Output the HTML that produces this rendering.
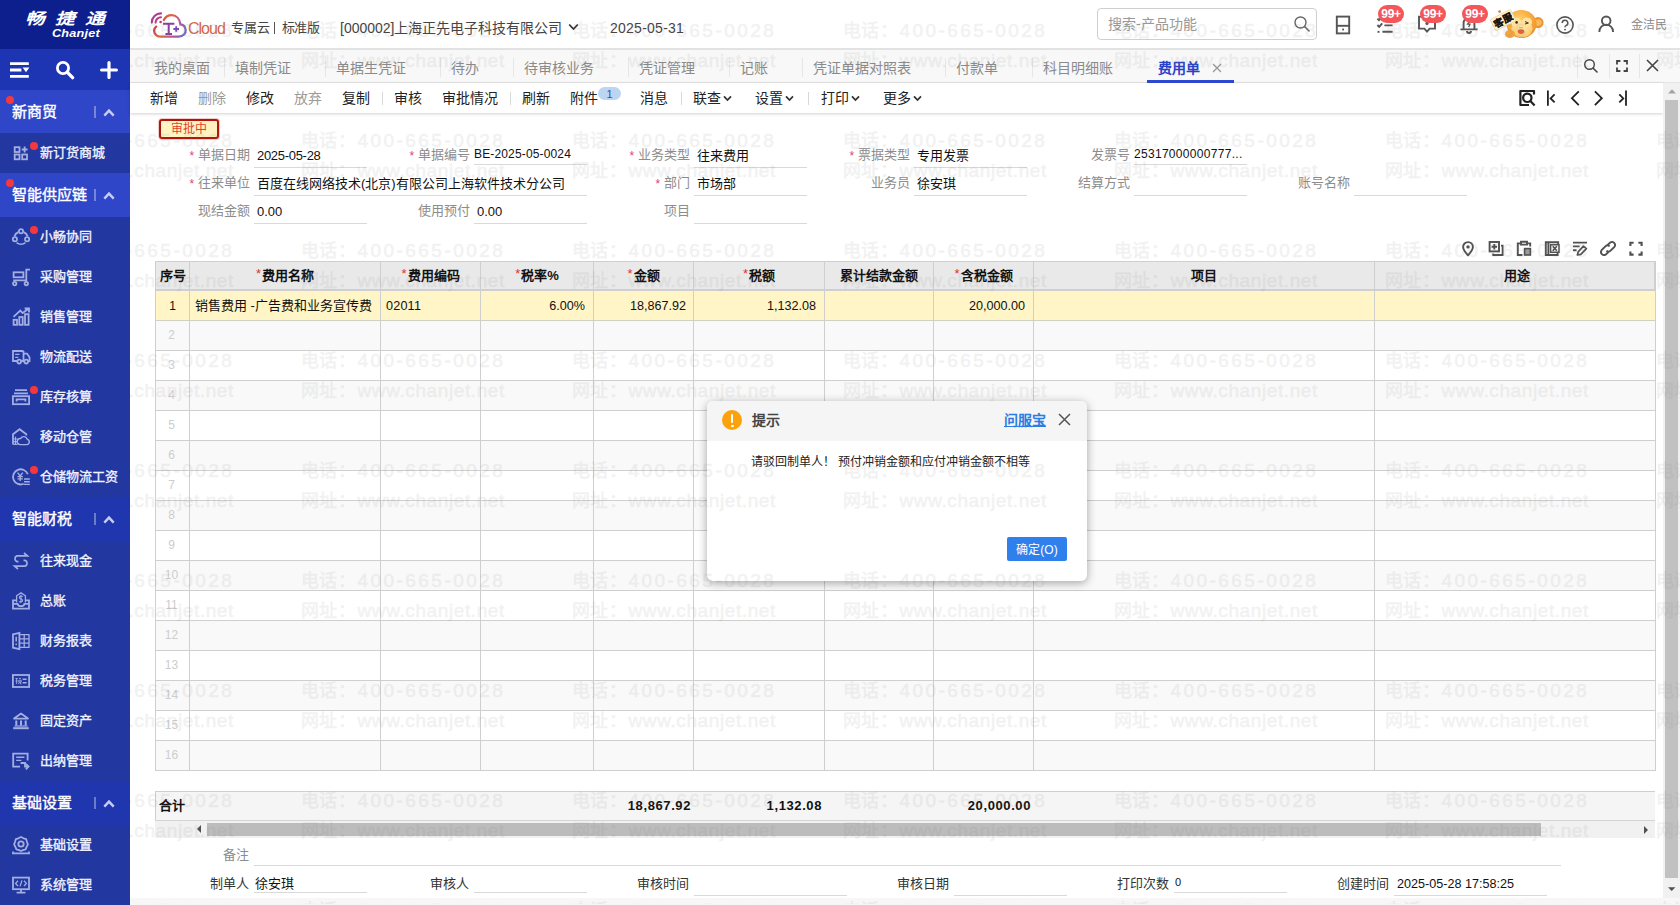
<!DOCTYPE html>
<html lang="zh-CN"><head><meta charset="utf-8"><title>费用单</title>
<style>
*{box-sizing:border-box;margin:0;padding:0}
html,body{width:1680px;height:905px;overflow:hidden;background:#fff;font-family:"Liberation Sans",sans-serif;font-size:13px;color:#222}
.a{position:absolute}
.t{position:absolute;white-space:nowrap}
svg{position:absolute;overflow:visible}
#wm{position:absolute;left:130px;top:1px;width:1550px;height:903px;overflow:hidden;pointer-events:none;z-index:50;opacity:0.102}
#wm div{position:absolute;white-space:nowrap;color:#808080;-webkit-text-stroke:0.55px #808080;line-height:24px;height:24px}
#wm b{font-weight:normal;font-size:18px;letter-spacing:0.3px;position:absolute;left:0;top:0}
#wm i{font-style:normal;font-size:19px;position:absolute;left:56.5px;top:0}
</style></head><body>

<div class="a" style="left:0px;top:0px;width:130px;height:905px;background:#22379f;"></div>
<div class="a" style="left:0px;top:0px;width:130px;height:49px;background:#0d1f8d;"></div>
<div class="a" style="left:0px;top:49px;width:130px;height:41px;background:#1d35b3;"></div>
<div class="t" style="left:5px;top:8px;width:120px;height:22px;line-height:22px;text-align:center;font-size:15.5px;font-weight:bold;font-style:italic;color:#fff;letter-spacing:7.5px;text-indent:7.5px;transform:scaleX(1.27);transform-origin:50% 50%">畅捷通</div>
<svg style="left:9px;top:61px" width="21" height="18" viewBox="0 0 21 18" fill="none" stroke="#fff" stroke-width="2.8"><path d="M1 2.6 H19.8 M1 9 H12.4 M1 15.4 H19.8"/><path d="M13.6 6.6 H20.4 L17 11.2Z" fill="#fff" stroke="none"/></svg>
<svg style="left:55px;top:60px" width="20" height="20" viewBox="0 0 20 20" fill="none" stroke="#fff"><circle cx="8" cy="8" r="5.6" stroke-width="2.8"/><path d="M12.4 12.4 L17.6 17.6" stroke-width="3.4" stroke-linecap="round"/></svg>
<svg style="left:100px;top:61px" width="18" height="18" viewBox="0 0 18 18" fill="none" stroke="#fff" stroke-width="3.2" stroke-linecap="round"><path d="M9 1.6 V16.4 M1.6 9 H16.4"/></svg>
<div class="t" style="top:23.2px;height:20px;line-height:20px;font-size:11.5px;color:#fff;font-weight:bold;left:52px;font-style:italic;letter-spacing:0.2px;transform:scaleX(1.1);transform-origin:0 50%;">Chanjet</div>
<div class="a" style="left:0px;top:90px;width:130px;height:43px;background:#2e46c7;"></div>
<div class="t" style="top:101.5px;height:20px;line-height:20px;font-size:15px;color:#fff;left:12px;-webkit-text-stroke:0.4px #fff;">新商贸</div>
<div class="a" style="left:6px;top:96px;width:8px;height:8px;background:#f5383d;border-radius:50%;"></div>
<div class="a" style="left:94px;top:106px;width:2px;height:12px;background:rgba(255,255,255,0.35);"></div>
<svg style="left:103px;top:107.5px" width="12" height="9" viewBox="0 0 12 9"><path d="M1.3 7.6 L6 2.6 L10.7 7.6" fill="none" stroke="#c6ccf6" stroke-width="2.4"/></svg>
<svg style="left:12px;top:144px" width="18" height="18" viewBox="0 0 18 18" fill="none" stroke="#a3aee3" stroke-width="1.8"><rect x="2.7" y="3.2" width="4.8" height="4.8"/><rect x="2.7" y="10.5" width="4.8" height="4.8"/><rect x="10.2" y="10.5" width="4.8" height="4.8"/><path d="M12.6 2.6 V8.4 M9.7 5.5 H15.5"/></svg>
<div class="t" style="top:143.0px;height:20px;line-height:20px;font-size:13px;color:#f0f2ff;left:40px;-webkit-text-stroke:0.35px #f0f2ff;">新订货商城</div>
<div class="a" style="left:30px;top:142px;width:8px;height:8px;background:#f5383d;border-radius:50%;"></div>
<div class="a" style="left:0px;top:173px;width:130px;height:44px;background:#2e46c7;"></div>
<div class="t" style="top:185.0px;height:20px;line-height:20px;font-size:15px;color:#fff;left:12px;-webkit-text-stroke:0.4px #fff;">智能供应链</div>
<div class="a" style="left:6px;top:179px;width:8px;height:8px;background:#f5383d;border-radius:50%;"></div>
<div class="a" style="left:94px;top:189px;width:2px;height:12px;background:rgba(255,255,255,0.35);"></div>
<svg style="left:103px;top:190.5px" width="12" height="9" viewBox="0 0 12 9"><path d="M1.3 7.6 L6 2.6 L10.7 7.6" fill="none" stroke="#c6ccf6" stroke-width="2.4"/></svg>
<svg style="left:12px;top:228px" width="18" height="18" viewBox="0 0 18 18" fill="none" stroke="#a3aee3" stroke-width="1.8"><circle cx="9" cy="3.2" r="2.1"/><circle cx="2.9" cy="11.2" r="2.1"/><circle cx="15.1" cy="11.2" r="2.1"/><path d="M6.3 4.2 A7 7 0 0 0 2.4 8.3 M11.7 4.2 A7 7 0 0 1 15.6 8.3 M4.6 14.6 A7 7 0 0 0 13.4 14.6"/></svg>
<div class="t" style="top:227.0px;height:20px;line-height:20px;font-size:13px;color:#f0f2ff;left:40px;-webkit-text-stroke:0.35px #f0f2ff;">小畅协同</div>
<div class="a" style="left:30px;top:226px;width:8px;height:8px;background:#f5383d;border-radius:50%;"></div>
<svg style="left:12px;top:268px" width="18" height="18" viewBox="0 0 18 18" fill="none" stroke="#a3aee3" stroke-width="1.8"><path d="M18 1.7 H14.3 V12.3 H1.2"/><rect x="1.6" y="4.3" width="9.8" height="5"/><circle cx="2.7" cy="15.6" r="1.7"/><circle cx="14.3" cy="15.6" r="1.7"/></svg>
<div class="t" style="top:267.0px;height:20px;line-height:20px;font-size:13px;color:#f0f2ff;left:40px;-webkit-text-stroke:0.35px #f0f2ff;">采购管理</div>
<svg style="left:12px;top:308px" width="18" height="18" viewBox="0 0 18 18" fill="none" stroke="#a3aee3" stroke-width="1.8"><rect x="1.6" y="11.8" width="3.4" height="5"/><rect x="7.3" y="9" width="3.4" height="7.8"/><rect x="13" y="6.2" width="3.6" height="10.6"/><path d="M1.5 8.8 L8.3 2.6 L10.6 5 L16.6 0.7 M12.6 0.5 H17 V4.6"/></svg>
<div class="t" style="top:307.0px;height:20px;line-height:20px;font-size:13px;color:#f0f2ff;left:40px;-webkit-text-stroke:0.35px #f0f2ff;">销售管理</div>
<svg style="left:12px;top:348px" width="18" height="18" viewBox="0 0 18 18" fill="none" stroke="#a3aee3" stroke-width="1.8"><path d="M11.5 3 V13 H9.6 M5 13 H1 V3 H11.5 M11.5 5.6 H15 L17.5 9.3 V13 H16.2 M11.5 13 H12"/><circle cx="7.2" cy="13.6" r="1.9"/><circle cx="14.2" cy="13.6" r="1.9"/><path d="M3.2 6.4 H7.6 M3.2 9.3 H6.3" stroke-width="1.3"/></svg>
<div class="t" style="top:347.0px;height:20px;line-height:20px;font-size:13px;color:#f0f2ff;left:40px;-webkit-text-stroke:0.35px #f0f2ff;">物流配送</div>
<svg style="left:12px;top:388px" width="18" height="18" viewBox="0 0 18 18" fill="none" stroke="#a3aee3" stroke-width="1.8"><path d="M3 2.2 H15 M2 5.3 H16"/><rect x="0.9" y="8.2" width="16.2" height="8"/><path d="M4.6 13.6 V11.3 H13.4 V13.6"/></svg>
<div class="t" style="top:387.0px;height:20px;line-height:20px;font-size:13px;color:#f0f2ff;left:40px;-webkit-text-stroke:0.35px #f0f2ff;">库存核算</div>
<div class="a" style="left:30px;top:386px;width:8px;height:8px;background:#f5383d;border-radius:50%;"></div>
<svg style="left:12px;top:428px" width="18" height="18" viewBox="0 0 18 18" fill="none" stroke="#a3aee3" stroke-width="1.8"><path d="M1 16.5 V6.2 L7.6 1.2 L14.3 6.2 V7.6"/><path d="M8 16.6 H14.6 A2.7 2.7 0 0 0 15.3 11.3 A3.6 3.6 0 0 0 8.6 10.6 A3 3 0 0 0 8 16.6Z" stroke-width="1.4"/><path d="M1.4 11 H5.6 M1.4 13.7 H5.6 M1.4 16.4 H5.6 M3.5 8.8 V16.4" stroke-width="1.2"/></svg>
<div class="t" style="top:427.0px;height:20px;line-height:20px;font-size:13px;color:#f0f2ff;left:40px;-webkit-text-stroke:0.35px #f0f2ff;">移动仓管</div>
<svg style="left:12px;top:468px" width="18" height="18" viewBox="0 0 18 18" fill="none" stroke="#a3aee3" stroke-width="1.8"><path d="M11.8 15.8 A7.6 7.6 0 1 1 15.8 6.3"/><path d="M5.6 4.6 L8.2 8 L10.8 4.6 M8.2 8 V13 M5.5 8.6 H10.9 M5.5 10.9 H10.9" stroke-width="1.4"/><path d="M12 11 H17.8 M12 13.7 H17.8 M12 16.4 H17.8" stroke-width="1.4"/></svg>
<div class="t" style="top:467.0px;height:20px;line-height:20px;font-size:13px;color:#f0f2ff;left:40px;-webkit-text-stroke:0.35px #f0f2ff;">仓储物流工资</div>
<div class="a" style="left:30px;top:466px;width:8px;height:8px;background:#f5383d;border-radius:50%;"></div>
<div class="a" style="left:0px;top:497px;width:130px;height:44px;background:#2036ae;"></div>
<div class="t" style="top:509.0px;height:20px;line-height:20px;font-size:15px;color:#fff;left:12px;-webkit-text-stroke:0.4px #fff;">智能财税</div>
<div class="a" style="left:94px;top:513px;width:2px;height:12px;background:rgba(255,255,255,0.35);"></div>
<svg style="left:103px;top:514.5px" width="12" height="9" viewBox="0 0 12 9"><path d="M1.3 7.6 L6 2.6 L10.7 7.6" fill="none" stroke="#c6ccf6" stroke-width="2.4"/></svg>
<svg style="left:12px;top:552px" width="18" height="18" viewBox="0 0 18 18" fill="none" stroke="#a3aee3" stroke-width="1.8"><path d="M12 1 L15.4 3.9 H5 A3 3 0 0 0 5 9.6 H6.5 M6 17 L2.6 14.1 H13 A3 3 0 0 0 13 8.4 H11.5" stroke-width="1.7"/></svg>
<div class="t" style="top:551.0px;height:20px;line-height:20px;font-size:13px;color:#f0f2ff;left:40px;-webkit-text-stroke:0.35px #f0f2ff;">往来现金</div>
<svg style="left:12px;top:592px" width="18" height="18" viewBox="0 0 18 18" fill="none" stroke="#a3aee3" stroke-width="1.8"><path d="M4.6 8.4 H1 V16.6 H17 V8.4 H13.4 M1 11.8 H5.6 Q6 14.2 9 14.2 Q12 14.2 12.4 11.8 H17"/><path d="M4.6 10.5 V3.8 L9 0.9 L13.4 3.8 V10.5" stroke-width="1.3"/><path d="M10.7 4.5 Q9 3.4 7.6 4.6 Q6.8 6.2 9 6.9 Q11.2 7.7 10.3 9.3 Q9 10.4 7.2 9.4 M9 2.8 V11" stroke-width="1.1"/></svg>
<div class="t" style="top:591.0px;height:20px;line-height:20px;font-size:13px;color:#f0f2ff;left:40px;-webkit-text-stroke:0.35px #f0f2ff;">总账</div>
<svg style="left:12px;top:632px" width="18" height="18" viewBox="0 0 18 18" fill="none" stroke="#a3aee3" stroke-width="1.8"><path d="M1 2.3 L7.4 0.9 V17.1 L1 15.7Z"/><path d="M7.4 2.6 H17 V15.4 H7.4 M7.4 6.9 H17 M7.4 11.1 H17 M12.2 2.6 V15.4" stroke-width="1.3"/><path d="M4.2 4.8 V9.4 M4.2 11.4 V13" stroke-width="1.5"/></svg>
<div class="t" style="top:631.0px;height:20px;line-height:20px;font-size:13px;color:#f0f2ff;left:40px;-webkit-text-stroke:0.35px #f0f2ff;">财务报表</div>
<svg style="left:12px;top:672px" width="18" height="18" viewBox="0 0 18 18" fill="none" stroke="#a3aee3" stroke-width="1.8"><rect x="0.9" y="3" width="16.2" height="12"/><path d="M10.6 7.2 H14.6 M10.6 10.8 H14.6" stroke-width="1.4"/><path d="M3.4 6.6 H5.8 M4.6 6 V12 M3.4 9 H5.8 M7 6.4 H9 M6.8 8.2 H9.2 V10 H6.8Z M7.4 10 L6.6 12 M8.6 10 V12 H9.4" stroke-width="0.9"/></svg>
<div class="t" style="top:671.0px;height:20px;line-height:20px;font-size:13px;color:#f0f2ff;left:40px;-webkit-text-stroke:0.35px #f0f2ff;">税务管理</div>
<svg style="left:12px;top:712px" width="18" height="18" viewBox="0 0 18 18" fill="none" stroke="#a3aee3" stroke-width="1.8"><path d="M2 6.6 L9 1.6 L16 6.6Z" stroke-linejoin="round"/><path d="M4.3 8.4 V13.6 M9 8.4 V13.6 M13.7 8.4 V13.6" stroke-width="2"/><path d="M1.2 16.2 H16.8" stroke-width="2"/><path d="M2.4 14 H15.6" stroke-width="1.2"/></svg>
<div class="t" style="top:711.0px;height:20px;line-height:20px;font-size:13px;color:#f0f2ff;left:40px;-webkit-text-stroke:0.35px #f0f2ff;">固定资产</div>
<svg style="left:12px;top:752px" width="18" height="18" viewBox="0 0 18 18" fill="none" stroke="#a3aee3" stroke-width="1.8"><path d="M8 14.6 H1.2 V1.6 H15.6 V8.6"/><path d="M4.2 5.3 H12.4 M4.2 8.4 H9.4" stroke-width="1.4"/><path d="M8.6 11 H13 V14.6 H16.4 M13.8 11.8 L16.6 14.6 L13.8 17.4"/></svg>
<div class="t" style="top:751.0px;height:20px;line-height:20px;font-size:13px;color:#f0f2ff;left:40px;-webkit-text-stroke:0.35px #f0f2ff;">出纳管理</div>
<div class="a" style="left:0px;top:781px;width:130px;height:44px;background:#2036ae;"></div>
<div class="t" style="top:793.0px;height:20px;line-height:20px;font-size:15px;color:#fff;left:12px;-webkit-text-stroke:0.4px #fff;">基础设置</div>
<div class="a" style="left:94px;top:797px;width:2px;height:12px;background:rgba(255,255,255,0.35);"></div>
<svg style="left:103px;top:798.5px" width="12" height="9" viewBox="0 0 12 9"><path d="M1.3 7.6 L6 2.6 L10.7 7.6" fill="none" stroke="#c6ccf6" stroke-width="2.4"/></svg>
<svg style="left:12px;top:836px" width="18" height="18" viewBox="0 0 18 18" fill="none" stroke="#a3aee3" stroke-width="1.8"><path d="M9 1 L11.6 2.3 L14.2 3.2 L15 6 L15.9 8.4 L14.6 10.9 L13.6 13.4 L10.9 14.1 L9 15 L7.1 14.1 L4.4 13.4 L3.4 10.9 L2.1 8.4 L3 6 L3.8 3.2 L6.4 2.3Z" stroke-linejoin="round"/><circle cx="9" cy="8" r="2.7"/><path d="M1 15.6 V17.3 H17 V15.6"/></svg>
<div class="t" style="top:835.0px;height:20px;line-height:20px;font-size:13px;color:#f0f2ff;left:40px;-webkit-text-stroke:0.35px #f0f2ff;">基础设置</div>
<svg style="left:12px;top:876px" width="18" height="18" viewBox="0 0 18 18" fill="none" stroke="#a3aee3" stroke-width="1.8"><rect x="1" y="1.6" width="16" height="11.6"/><path d="M9 13.2 V16.4 M4.6 16.6 H13.4"/><path d="M6 4.8 L3.6 7.4 L6 10 M12 4.8 L14.4 7.4 L12 10 M10 4.4 L8 10.4" stroke-width="1.3"/></svg>
<div class="t" style="top:875.0px;height:20px;line-height:20px;font-size:13px;color:#f0f2ff;left:40px;-webkit-text-stroke:0.35px #f0f2ff;">系统管理</div>
<div class="a" style="left:130px;top:0px;width:1550px;height:49px;background:#fff;border-bottom:1px solid #e2e2e2;"></div>
<svg style="left:148px;top:10px" width="42" height="32" viewBox="148 10 42 32" fill="none">
<defs><linearGradient id="cg" x1="153" y1="20" x2="187" y2="36" gradientUnits="userSpaceOnUse"><stop offset="0" stop-color="#c2304e"/><stop offset="0.35" stop-color="#e0683c"/><stop offset="0.7" stop-color="#b058a0"/><stop offset="1" stop-color="#5a74d8"/></linearGradient>
<linearGradient id="cw" x1="151" y1="14" x2="162" y2="24" gradientUnits="userSpaceOnUse"><stop offset="0" stop-color="#a13fa8"/><stop offset="1" stop-color="#c83a6a"/></linearGradient></defs>
<path d="M156.2 26.6 C153.4 28.6 153.2 33.2 156.8 35.6 C158 36.4 159.4 36.6 160.6 36.6 H178.6 C183.2 36.6 186.2 33.4 185.6 29.6 C185.2 26.6 182.8 24.6 180.4 24.4 C179.8 18.8 176.2 15.2 171.6 15.2 C168 15.2 165.4 17.2 163.8 20" stroke="url(#cg)" stroke-width="2.3" stroke-linecap="round"/>
<path d="M151.8 22.6 A9.2 9.2 0 0 1 161 13.4 M155.6 22.6 A5.4 5.4 0 0 1 161 17.2" stroke="url(#cw)" stroke-width="2.1" stroke-linecap="round"/>
<circle cx="160.6" cy="22" r="1.3" fill="#c0386a"/>
<path d="M163 23.8 H174.4 M168.7 23.8 V34 M165.4 34 H172" stroke="#8a3fa0" stroke-width="2"/>
<path d="M173.4 29 H179 M176.2 26.2 V31.8" stroke="#7a48b8" stroke-width="1.8"/>
</svg>
<div class="t" style="top:18.5px;height:20px;line-height:20px;font-size:16px;color:#d4674a;left:188px;letter-spacing:-1px;">Cloud</div>
<div class="t" style="top:18.0px;height:20px;line-height:20px;font-size:13px;color:#444;left:230.5px;">专属云</div>
<div class="a" style="left:274px;top:22px;width:1.3px;height:12px;background:#555;"></div>
<div class="t" style="top:18.0px;height:20px;line-height:20px;font-size:13px;color:#444;left:281.5px;letter-spacing:-0.4px;">标准版</div>
<div class="t" style="top:18.0px;height:20px;line-height:20px;font-size:14px;color:#444;left:340px;">[000002]上海正先电子科技有限公司</div>
<svg style="left:568px;top:23px" width="11" height="8" viewBox="0 0 11 8"><path d="M1.2 1.5 L5.5 6 L9.8 1.5" fill="none" stroke="#333" stroke-width="1.8"/></svg>
<div class="t" style="top:18.0px;height:20px;line-height:20px;font-size:14px;color:#444;left:610px;letter-spacing:0.25px;">2025-05-31</div>
<div class="a" style="left:1097px;top:8px;width:220px;height:32px;background:#fff;border:1px solid #cfcfcf;border-radius:4px;"></div>
<div class="t" style="top:14.0px;height:20px;line-height:20px;font-size:14px;color:#999;left:1108px;">搜索-产品功能</div>
<svg style="left:1293px;top:15px" width="18" height="18" viewBox="0 0 18 18"><circle cx="7.5" cy="7.5" r="5.5" fill="none" stroke="#666" stroke-width="1.4"/><path d="M11.8 11.8 L16 16" stroke="#666" stroke-width="1.6" stroke-linecap="round"/></svg>
<svg style="left:1335px;top:15px" width="16" height="20" viewBox="0 0 16 20" fill="none" stroke="#555" stroke-width="1.9"><rect x="1.8" y="1.6" width="12.4" height="16.8"/><path d="M1.8 10.8 H14.2"/><rect x="7.2" y="13.6" width="1.8" height="1.8" fill="#555" stroke="none"/></svg>
<svg style="left:1376px;top:16px" width="18" height="18" viewBox="0 0 18 18" fill="none" stroke="#555" stroke-width="1.9"><path d="M1.4 2.6 L3 4.2 L5.6 1.2 M8 3 H16.6 M1.4 9 L3.2 10.8 L6.2 7.4 M8.4 9.4 H16.6 M6.4 15.8 H16.6"/><rect x="1.6" y="14.9" width="1.9" height="1.9" fill="#555" stroke="none"/></svg>
<div class="a" style="left:1378px;top:5px;width:26px;height:18px;border-radius:9px;background:#f4575a"></div><div class="t" style="left:1378px;top:4px;width:26px;height:20px;line-height:20px;font-size:12px;font-weight:bold;color:#fff;text-align:center;letter-spacing:-0.3px">99+</div>
<svg style="left:1417px;top:15px" width="20" height="19" viewBox="0 0 20 19" fill="none" stroke="#555" stroke-width="1.9"><path d="M2 1.6 H18 V13.6 H12.6 L10 16.6 L7.4 13.6 H2Z"/><circle cx="10" cy="8.4" r="1.6" fill="#555" stroke="none"/></svg>
<div class="a" style="left:1420px;top:5px;width:26px;height:18px;border-radius:9px;background:#f4575a"></div><div class="t" style="left:1420px;top:4px;width:26px;height:20px;line-height:20px;font-size:12px;font-weight:bold;color:#fff;text-align:center;letter-spacing:-0.3px">99+</div>
<svg style="left:1459px;top:14px" width="20" height="21" viewBox="0 0 20 21" fill="none" stroke="#555" stroke-width="1.9"><path d="M1.4 15.4 H18.6 M4.6 15.4 V9 A5.4 5.4 0 0 1 15.4 9 V15.4"/><path d="M8 17 A2 2 0 0 0 12 17"/><path d="M11.4 6.4 L8.6 10.2 H11 L9.6 13" stroke-width="1.3"/></svg>
<div class="a" style="left:1462px;top:5px;width:26px;height:18px;border-radius:9px;background:#f4575a"></div><div class="t" style="left:1462px;top:4px;width:26px;height:20px;line-height:20px;font-size:12px;font-weight:bold;color:#fff;text-align:center;letter-spacing:-0.3px">99+</div>
<svg style="left:1490px;top:6px" width="56" height="36" viewBox="1490 6 56 36">
<defs><radialGradient id="mh" cx="0.42" cy="0.35" r="0.75"><stop offset="0" stop-color="#ffd36a"/><stop offset="0.6" stop-color="#f7a73a"/><stop offset="1" stop-color="#e98a26"/></radialGradient>
<radialGradient id="mf" cx="0.5" cy="0.4" r="0.7"><stop offset="0" stop-color="#ffe9a8"/><stop offset="1" stop-color="#fbc766"/></radialGradient></defs>
<circle cx="1538" cy="22.6" r="5.6" fill="#f0952e"/><circle cx="1538.4" cy="22.8" r="3.2" fill="#f9b85a"/>
<ellipse cx="1521.5" cy="24" rx="15" ry="14" fill="url(#mh)"/>
<ellipse cx="1522" cy="28.6" rx="10.6" ry="8.6" fill="url(#mf)"/>
<ellipse cx="1516" cy="22" rx="5" ry="4.6" fill="#ffe2a0"/><ellipse cx="1527" cy="22" rx="5" ry="4.6" fill="#ffe2a0"/>
<circle cx="1516.6" cy="22.4" r="1.3" fill="#4a2a14"/><path d="M1525 21.6 L1528.4 23 M1525 24 L1528.4 23" stroke="#4a2a14" stroke-width="1" fill="none"/>
<ellipse cx="1521" cy="31.6" rx="3.2" ry="2.4" fill="#e2603a"/><circle cx="1520" cy="27.6" r="0.6" fill="#a8642a"/><circle cx="1522" cy="27.6" r="0.6" fill="#a8642a"/>
<ellipse cx="1510" cy="34" rx="5" ry="4" fill="#f4a43c"/>
<g transform="rotate(-27 1503 20)"><rect x="1491.6" y="13.8" width="22.8" height="12.6" rx="1" fill="#fff3cf" stroke="#e9d9a6" stroke-width="0.8"/><text x="1503" y="23.6" font-size="9.5" font-weight="bold" fill="#1e1812" stroke="#1e1812" stroke-width="0.4" text-anchor="middle" font-family="Liberation Sans, sans-serif">客服</text></g>
<circle cx="1499.6" cy="11.6" r="1.4" fill="#c88a44"/>
</svg>
<svg style="left:1555px;top:15px" width="20" height="20" viewBox="0 0 20 20" fill="none" stroke="#555" stroke-width="1.6"><circle cx="10" cy="10" r="8.1"/><path d="M7.2 8 A2.8 2.8 0 1 1 10.9 10.6 Q10 11 10 12.3" stroke-width="1.5"/><circle cx="10" cy="14.6" r="0.95" fill="#555" stroke="none"/></svg>
<svg style="left:1597px;top:14px" width="18" height="20" viewBox="0 0 18 20" fill="none" stroke="#555" stroke-width="1.9"><circle cx="9.2" cy="6.8" r="4.3"/><path d="M2.4 18 V17.4 A6.8 6.8 0 0 1 16 17.4 V18"/></svg>
<div class="t" style="top:15.0px;height:20px;line-height:20px;font-size:12px;color:#888;left:1630.5px;">金洁民</div>
<div class="a" style="left:130px;top:49px;width:1550px;height:34px;background:#f8f8f8;border-bottom:1px solid #e4e4e4;border-top:1px solid #e2e2e2;"></div>
<div class="t" style="top:58.0px;height:20px;line-height:20px;font-size:14px;color:#8a8a8a;left:154px;">我的桌面</div>
<div class="t" style="top:58.0px;height:20px;line-height:20px;font-size:14px;color:#8a8a8a;left:235px;">填制凭证</div>
<div class="t" style="top:58.0px;height:20px;line-height:20px;font-size:14px;color:#8a8a8a;left:336px;">单据生凭证</div>
<div class="t" style="top:58.0px;height:20px;line-height:20px;font-size:14px;color:#8a8a8a;left:451px;">待办</div>
<div class="t" style="top:58.0px;height:20px;line-height:20px;font-size:14px;color:#8a8a8a;left:524px;">待审核业务</div>
<div class="t" style="top:58.0px;height:20px;line-height:20px;font-size:14px;color:#8a8a8a;left:639px;">凭证管理</div>
<div class="t" style="top:58.0px;height:20px;line-height:20px;font-size:14px;color:#8a8a8a;left:740px;">记账</div>
<div class="t" style="top:58.0px;height:20px;line-height:20px;font-size:14px;color:#8a8a8a;left:813px;">凭证单据对照表</div>
<div class="t" style="top:58.0px;height:20px;line-height:20px;font-size:14px;color:#8a8a8a;left:956px;">付款单</div>
<div class="t" style="top:58.0px;height:20px;line-height:20px;font-size:14px;color:#8a8a8a;left:1043px;">科目明细账</div>
<div class="t" style="top:58.0px;height:20px;line-height:20px;font-size:14px;color:#2b41c8;font-weight:bold;left:1158px;">费用单</div>
<div class="a" style="left:224px;top:58px;width:1px;height:19px;background:#e6e6e6;"></div>
<div class="a" style="left:325px;top:58px;width:1px;height:19px;background:#e6e6e6;"></div>
<div class="a" style="left:440px;top:58px;width:1px;height:19px;background:#e6e6e6;"></div>
<div class="a" style="left:513px;top:58px;width:1px;height:19px;background:#e6e6e6;"></div>
<div class="a" style="left:628px;top:58px;width:1px;height:19px;background:#e6e6e6;"></div>
<div class="a" style="left:729px;top:58px;width:1px;height:19px;background:#e6e6e6;"></div>
<div class="a" style="left:802px;top:58px;width:1px;height:19px;background:#e6e6e6;"></div>
<div class="a" style="left:945px;top:58px;width:1px;height:19px;background:#e6e6e6;"></div>
<div class="a" style="left:1032px;top:58px;width:1px;height:19px;background:#e6e6e6;"></div>
<div class="a" style="left:1147px;top:80px;width:87px;height:3px;background:#2e49d1;"></div>
<svg style="left:1212px;top:63px" width="10" height="10" viewBox="0 0 10 10"><path d="M1 1 L9 9 M9 1 L1 9" stroke="#999" stroke-width="1.3"/></svg>
<div class="a" style="left:1577px;top:54px;width:1px;height:24px;background:#e6e6e6;"></div>
<div class="a" style="left:1609px;top:54px;width:1px;height:24px;background:#e6e6e6;"></div>
<div class="a" style="left:1639px;top:54px;width:1px;height:24px;background:#e6e6e6;"></div>
<svg style="left:1583px;top:58px" width="16" height="16" viewBox="0 0 16 16"><circle cx="6.5" cy="6.5" r="4.8" fill="none" stroke="#444" stroke-width="1.4"/><path d="M10.2 10.2 L14 14" stroke="#444" stroke-width="1.6" stroke-linecap="round"/></svg>
<svg style="left:1615px;top:59px" width="14" height="14" viewBox="0 0 14 14"><path d="M2 5.4 V2 H5.4 M8.6 2 H12 V5.4 M12 8.6 V12 H8.6 M5.4 12 H2 V8.6" fill="none" stroke="#444" stroke-width="1.8"/></svg>
<svg style="left:1646px;top:59px" width="13" height="13" viewBox="0 0 13 13"><path d="M1 1 L12 12 M12 1 L1 12" stroke="#444" stroke-width="1.6"/></svg>
<div class="a" style="left:130px;top:83px;width:1533px;height:30px;background:#fff;box-shadow:0 1px 3px rgba(0,0,0,0.18);"></div>
<div class="t" style="top:88.0px;height:20px;line-height:20px;font-size:14px;color:#222;left:150px;">新增</div>
<div class="t" style="top:88.0px;height:20px;line-height:20px;font-size:14px;color:#9a9a9a;left:198px;">删除</div>
<div class="t" style="top:88.0px;height:20px;line-height:20px;font-size:14px;color:#222;left:246px;">修改</div>
<div class="t" style="top:88.0px;height:20px;line-height:20px;font-size:14px;color:#9a9a9a;left:294px;">放弃</div>
<div class="t" style="top:88.0px;height:20px;line-height:20px;font-size:14px;color:#222;left:342px;">复制</div>
<div class="t" style="top:88.0px;height:20px;line-height:20px;font-size:14px;color:#222;left:394px;">审核</div>
<div class="t" style="top:88.0px;height:20px;line-height:20px;font-size:14px;color:#222;left:442px;">审批情况</div>
<div class="t" style="top:88.0px;height:20px;line-height:20px;font-size:14px;color:#222;left:522px;">刷新</div>
<div class="t" style="top:88.0px;height:20px;line-height:20px;font-size:14px;color:#222;left:570px;">附件</div>
<div class="t" style="top:88.0px;height:20px;line-height:20px;font-size:14px;color:#222;left:640px;">消息</div>
<div class="t" style="top:88.0px;height:20px;line-height:20px;font-size:14px;color:#222;left:693px;">联查</div>
<div class="t" style="top:88.0px;height:20px;line-height:20px;font-size:14px;color:#222;left:755px;">设置</div>
<div class="t" style="top:88.0px;height:20px;line-height:20px;font-size:14px;color:#222;left:821px;">打印</div>
<div class="t" style="top:88.0px;height:20px;line-height:20px;font-size:14px;color:#222;left:883px;">更多</div>
<div class="a" style="left:382px;top:92px;width:1px;height:13px;background:#d8d8d8;"></div>
<div class="a" style="left:510px;top:92px;width:1px;height:13px;background:#d8d8d8;"></div>
<div class="a" style="left:681px;top:92px;width:1px;height:13px;background:#d8d8d8;"></div>
<div class="a" style="left:808px;top:92px;width:1px;height:13px;background:#d8d8d8;"></div>
<svg style="left:723px;top:94.5px" width="9" height="7" viewBox="0 0 9 7"><path d="M1 1.3 L4.5 5 L8 1.3" fill="none" stroke="#333" stroke-width="1.7"/></svg>
<svg style="left:785px;top:94.5px" width="9" height="7" viewBox="0 0 9 7"><path d="M1 1.3 L4.5 5 L8 1.3" fill="none" stroke="#333" stroke-width="1.7"/></svg>
<svg style="left:851px;top:94.5px" width="9" height="7" viewBox="0 0 9 7"><path d="M1 1.3 L4.5 5 L8 1.3" fill="none" stroke="#333" stroke-width="1.7"/></svg>
<svg style="left:913px;top:94.5px" width="9" height="7" viewBox="0 0 9 7"><path d="M1 1.3 L4.5 5 L8 1.3" fill="none" stroke="#333" stroke-width="1.7"/></svg>
<div class="a" style="left:598px;top:87px;width:23px;height:13px;background:#bcd5f3;border-radius:7px;"></div>
<div class="t" style="top:83.5px;height:20px;line-height:20px;font-size:11px;color:#2a55a8;left:599.5px;width:20px;text-align:center;">1</div>
<svg style="left:1518px;top:89px" width="18" height="18" viewBox="0 0 18 18" fill="none" stroke="#222" stroke-width="2.2" stroke-linejoin="round"><path d="M16 5.4 V2 H2.4 V16 H11"/><circle cx="9.3" cy="8.8" r="4.2"/><path d="M12.4 12 L16.6 16.4"/></svg>
<svg style="left:1545px;top:90px" width="12" height="17" viewBox="0 0 12 17" fill="none" stroke="#222" stroke-width="1.8"><path d="M2.9 0.6 V15.8 M9.6 4.4 L5.6 8.4 L9.6 12.4"/></svg>
<svg style="left:1569px;top:90px" width="12" height="17" viewBox="0 0 12 17" fill="none" stroke="#222" stroke-width="1.8"><path d="M9.8 1.3 L2.9 8.2 L9.8 15.1"/></svg>
<svg style="left:1592px;top:90px" width="12" height="17" viewBox="0 0 12 17" fill="none" stroke="#222" stroke-width="1.8"><path d="M2.9 1.3 L9.8 8.2 L2.9 15.1"/></svg>
<svg style="left:1616px;top:90px" width="12" height="17" viewBox="0 0 12 17" fill="none" stroke="#222" stroke-width="1.8"><path d="M10 0.6 V15.8 M3.3 4.4 L7.3 8.4 L3.3 12.4"/></svg>
<div class="a" style="left:159px;top:119px;width:60px;height:20px;background:linear-gradient(90deg,#fff6c6,#fff0c0);border:2px solid #b3150d;border-radius:3px;box-shadow:0 0 0 1px rgba(179,21,13,0.22);"></div>
<div class="t" style="top:119.0px;height:20px;line-height:20px;font-size:12px;color:#e0452b;left:159.0px;width:60px;text-align:center;">审批中</div>
<div class="t" style="top:145.0px;height:20px;line-height:20px;font-size:13px;color:#8c8c8c;right:1430px;text-align:right;">单据日期</div><div class="t" style="top:146.0px;height:20px;line-height:20px;font-size:12px;color:#e3436f;left:189.5px;">*</div>
<div class="t" style="top:145.5px;height:20px;line-height:20px;font-size:13px;color:#111;left:257px;letter-spacing:-0.3px;">2025-05-28</div>
<div class="a" style="left:254px;top:167px;width:113px;height:1px;background:#d9d9d9;"></div>
<div class="t" style="top:145.0px;height:20px;line-height:20px;font-size:13px;color:#8c8c8c;right:1210px;text-align:right;">单据编号</div><div class="t" style="top:146.0px;height:20px;line-height:20px;font-size:12px;color:#e3436f;left:409.5px;">*</div>
<div class="t" style="top:143.5px;height:20px;line-height:20px;font-size:12px;color:#111;left:474px;letter-spacing:0.15px;">BE-2025-05-0024</div>
<div class="a" style="left:474px;top:164px;width:113px;height:1px;background:#d9d9d9;"></div>
<div class="t" style="top:145.0px;height:20px;line-height:20px;font-size:13px;color:#8c8c8c;right:990px;text-align:right;">业务类型</div><div class="t" style="top:146.0px;height:20px;line-height:20px;font-size:12px;color:#e3436f;left:629.5px;">*</div>
<div class="t" style="top:146.0px;height:20px;line-height:20px;font-size:13px;color:#111;left:697px;">往来费用</div>
<div class="a" style="left:694px;top:167px;width:113px;height:1px;background:#d9d9d9;"></div>
<div class="t" style="top:145.0px;height:20px;line-height:20px;font-size:13px;color:#8c8c8c;right:770px;text-align:right;">票据类型</div><div class="t" style="top:146.0px;height:20px;line-height:20px;font-size:12px;color:#e3436f;left:849.5px;">*</div>
<div class="t" style="top:146.0px;height:20px;line-height:20px;font-size:13px;color:#111;left:917px;">专用发票</div>
<div class="a" style="left:914px;top:167px;width:113px;height:1px;background:#d9d9d9;"></div>
<div class="t" style="top:145.0px;height:20px;line-height:20px;font-size:13px;color:#8c8c8c;right:550px;text-align:right;">发票号</div>
<div class="t" style="top:143.5px;height:20px;line-height:20px;font-size:12px;color:#111;left:1134px;letter-spacing:0.3px;">25317000000777...</div>
<div class="a" style="left:1134px;top:164px;width:113px;height:1px;background:#d9d9d9;"></div>
<div class="t" style="top:173.0px;height:20px;line-height:20px;font-size:13px;color:#8c8c8c;right:1430px;text-align:right;">往来单位</div><div class="t" style="top:174.0px;height:20px;line-height:20px;font-size:12px;color:#e3436f;left:189.5px;">*</div>
<div class="t" style="top:174.0px;height:20px;line-height:20px;font-size:13px;color:#111;left:257px;">百度在线网络技术(北京)有限公司上海软件技术分公司</div>
<div class="a" style="left:254px;top:195px;width:333px;height:1px;background:#d9d9d9;"></div>
<div class="t" style="top:173.0px;height:20px;line-height:20px;font-size:13px;color:#8c8c8c;right:990px;text-align:right;">部门</div><div class="t" style="top:174.0px;height:20px;line-height:20px;font-size:12px;color:#e3436f;left:655.5px;">*</div>
<div class="t" style="top:174.0px;height:20px;line-height:20px;font-size:13px;color:#111;left:697px;">市场部</div>
<div class="a" style="left:694px;top:195px;width:113px;height:1px;background:#d9d9d9;"></div>
<div class="t" style="top:173.0px;height:20px;line-height:20px;font-size:13px;color:#8c8c8c;right:770px;text-align:right;">业务员</div>
<div class="t" style="top:174.0px;height:20px;line-height:20px;font-size:13px;color:#111;left:917px;">徐安琪</div>
<div class="a" style="left:914px;top:195px;width:113px;height:1px;background:#d9d9d9;"></div>
<div class="t" style="top:173.0px;height:20px;line-height:20px;font-size:13px;color:#8c8c8c;right:550px;text-align:right;">结算方式</div>
<div class="a" style="left:1134px;top:195px;width:113px;height:1px;background:#d9d9d9;"></div>
<div class="t" style="top:173.0px;height:20px;line-height:20px;font-size:13px;color:#8c8c8c;right:330px;text-align:right;">账号名称</div>
<div class="a" style="left:1354px;top:195px;width:113px;height:1px;background:#d9d9d9;"></div>
<div class="t" style="top:201.0px;height:20px;line-height:20px;font-size:13px;color:#8c8c8c;right:1430px;text-align:right;">现结金额</div>
<div class="t" style="top:201.5px;height:20px;line-height:20px;font-size:13px;color:#111;left:257px;">0.00</div>
<div class="a" style="left:254px;top:223px;width:113px;height:1px;background:#d9d9d9;"></div>
<div class="t" style="top:201.0px;height:20px;line-height:20px;font-size:13px;color:#8c8c8c;right:1210px;text-align:right;">使用预付</div>
<div class="t" style="top:201.5px;height:20px;line-height:20px;font-size:13px;color:#111;left:477px;">0.00</div>
<div class="a" style="left:474px;top:223px;width:113px;height:1px;background:#d9d9d9;"></div>
<div class="t" style="top:201.0px;height:20px;line-height:20px;font-size:13px;color:#8c8c8c;right:990px;text-align:right;">项目</div>
<div class="a" style="left:694px;top:223px;width:113px;height:1px;background:#d9d9d9;"></div>
<div class="a" style="left:155px;top:261px;width:1500px;height:29px;background:#e9e9e9;border:1px solid #cfcfcf;"></div>
<div class="t" style="top:266.0px;height:20px;line-height:20px;font-size:13px;color:#111;font-weight:bold;left:155.5px;width:34px;text-align:center;">序号</div>
<div class="t" style="top:266.0px;height:20px;line-height:20px;font-size:13px;color:#111;font-weight:bold;left:189.5px;width:191px;text-align:center;"><span style="color:#e0322d;font-weight:normal;position:relative;top:-2px;margin-right:1px">*</span>费用名称</div>
<div class="t" style="top:266.0px;height:20px;line-height:20px;font-size:13px;color:#111;font-weight:bold;left:380.5px;width:100px;text-align:center;"><span style="color:#e0322d;font-weight:normal;position:relative;top:-2px;margin-right:1px">*</span>费用编码</div>
<div class="t" style="top:266.0px;height:20px;line-height:20px;font-size:13px;color:#111;font-weight:bold;left:480.5px;width:113px;text-align:center;"><span style="color:#e0322d;font-weight:normal;position:relative;top:-2px;margin-right:1px">*</span>税率%</div>
<div class="t" style="top:266.0px;height:20px;line-height:20px;font-size:13px;color:#111;font-weight:bold;left:593.5px;width:100px;text-align:center;"><span style="color:#e0322d;font-weight:normal;position:relative;top:-2px;margin-right:1px">*</span>金额</div>
<div class="t" style="top:266.0px;height:20px;line-height:20px;font-size:13px;color:#111;font-weight:bold;left:693.5px;width:131px;text-align:center;"><span style="color:#e0322d;font-weight:normal;position:relative;top:-2px;margin-right:1px">*</span>税额</div>
<div class="t" style="top:266.0px;height:20px;line-height:20px;font-size:13px;color:#111;font-weight:bold;left:824.5px;width:109px;text-align:center;">累计结款金额</div>
<div class="t" style="top:266.0px;height:20px;line-height:20px;font-size:13px;color:#111;font-weight:bold;left:933.5px;width:100px;text-align:center;"><span style="color:#e0322d;font-weight:normal;position:relative;top:-2px;margin-right:1px">*</span>含税金额</div>
<div class="t" style="top:266.0px;height:20px;line-height:20px;font-size:13px;color:#111;font-weight:bold;left:1033.5px;width:341px;text-align:center;">项目</div>
<div class="t" style="top:266.0px;height:20px;line-height:20px;font-size:13px;color:#111;font-weight:bold;left:1376.5px;width:281px;text-align:center;">用途</div>
<div class="a" style="left:155px;top:290px;width:1500px;height:30px;background:#fff5c6;"></div>
<div class="a" style="left:155px;top:320px;width:1500px;height:30px;background:#f9f9f9;"></div>
<div class="a" style="left:155px;top:350px;width:1500px;height:30px;background:#fff;"></div>
<div class="a" style="left:155px;top:380px;width:1500px;height:30px;background:#f9f9f9;"></div>
<div class="a" style="left:155px;top:410px;width:1500px;height:30px;background:#fff;"></div>
<div class="a" style="left:155px;top:440px;width:1500px;height:30px;background:#f9f9f9;"></div>
<div class="a" style="left:155px;top:470px;width:1500px;height:30px;background:#fff;"></div>
<div class="a" style="left:155px;top:500px;width:1500px;height:30px;background:#f9f9f9;"></div>
<div class="a" style="left:155px;top:530px;width:1500px;height:30px;background:#fff;"></div>
<div class="a" style="left:155px;top:560px;width:1500px;height:30px;background:#f9f9f9;"></div>
<div class="a" style="left:155px;top:590px;width:1500px;height:30px;background:#fff;"></div>
<div class="a" style="left:155px;top:620px;width:1500px;height:30px;background:#f9f9f9;"></div>
<div class="a" style="left:155px;top:650px;width:1500px;height:30px;background:#fff;"></div>
<div class="a" style="left:155px;top:680px;width:1500px;height:30px;background:#f9f9f9;"></div>
<div class="a" style="left:155px;top:710px;width:1500px;height:30px;background:#fff;"></div>
<div class="a" style="left:155px;top:740px;width:1500px;height:30px;background:#f9f9f9;"></div>
<div class="a" style="left:155px;top:290px;width:1500px;height:1px;background:#cfcfcf;"></div>
<div class="a" style="left:155px;top:320px;width:1500px;height:1px;background:#d2d0c2;"></div>
<div class="a" style="left:155px;top:350px;width:1500px;height:1px;background:#cfcfcf;"></div>
<div class="a" style="left:155px;top:380px;width:1500px;height:1px;background:#cfcfcf;"></div>
<div class="a" style="left:155px;top:410px;width:1500px;height:1px;background:#cfcfcf;"></div>
<div class="a" style="left:155px;top:440px;width:1500px;height:1px;background:#cfcfcf;"></div>
<div class="a" style="left:155px;top:470px;width:1500px;height:1px;background:#cfcfcf;"></div>
<div class="a" style="left:155px;top:500px;width:1500px;height:1px;background:#cfcfcf;"></div>
<div class="a" style="left:155px;top:530px;width:1500px;height:1px;background:#cfcfcf;"></div>
<div class="a" style="left:155px;top:560px;width:1500px;height:1px;background:#cfcfcf;"></div>
<div class="a" style="left:155px;top:590px;width:1500px;height:1px;background:#cfcfcf;"></div>
<div class="a" style="left:155px;top:620px;width:1500px;height:1px;background:#cfcfcf;"></div>
<div class="a" style="left:155px;top:650px;width:1500px;height:1px;background:#cfcfcf;"></div>
<div class="a" style="left:155px;top:680px;width:1500px;height:1px;background:#cfcfcf;"></div>
<div class="a" style="left:155px;top:710px;width:1500px;height:1px;background:#cfcfcf;"></div>
<div class="a" style="left:155px;top:740px;width:1500px;height:1px;background:#cfcfcf;"></div>
<div class="a" style="left:155px;top:770px;width:1500px;height:1px;background:#cfcfcf;"></div>
<div class="a" style="left:155px;top:261px;width:1px;height:510px;background:#cfcfcf;"></div>
<div class="a" style="left:189px;top:261px;width:1px;height:510px;background:#cfcfcf;"></div>
<div class="a" style="left:380px;top:261px;width:1px;height:510px;background:#cfcfcf;"></div>
<div class="a" style="left:480px;top:261px;width:1px;height:510px;background:#cfcfcf;"></div>
<div class="a" style="left:593px;top:261px;width:1px;height:510px;background:#cfcfcf;"></div>
<div class="a" style="left:693px;top:261px;width:1px;height:510px;background:#cfcfcf;"></div>
<div class="a" style="left:824px;top:261px;width:1px;height:510px;background:#cfcfcf;"></div>
<div class="a" style="left:933px;top:261px;width:1px;height:510px;background:#cfcfcf;"></div>
<div class="a" style="left:1033px;top:261px;width:1px;height:510px;background:#cfcfcf;"></div>
<div class="a" style="left:1374px;top:261px;width:1px;height:510px;background:#cfcfcf;"></div>
<div class="a" style="left:1655px;top:261px;width:1px;height:510px;background:#cfcfcf;"></div>
<div class="t" style="top:295.5px;height:20px;line-height:20px;font-size:12px;color:#111;left:155.5px;width:34px;text-align:center;">1</div>
<div class="t" style="top:324.5px;height:20px;line-height:20px;font-size:12px;color:#cdcdcd;left:154.5px;width:34px;text-align:center;">2</div>
<div class="t" style="top:354.5px;height:20px;line-height:20px;font-size:12px;color:#cdcdcd;left:154.5px;width:34px;text-align:center;">3</div>
<div class="t" style="top:384.5px;height:20px;line-height:20px;font-size:12px;color:#cdcdcd;left:154.5px;width:34px;text-align:center;">4</div>
<div class="t" style="top:414.5px;height:20px;line-height:20px;font-size:12px;color:#cdcdcd;left:154.5px;width:34px;text-align:center;">5</div>
<div class="t" style="top:444.5px;height:20px;line-height:20px;font-size:12px;color:#cdcdcd;left:154.5px;width:34px;text-align:center;">6</div>
<div class="t" style="top:474.5px;height:20px;line-height:20px;font-size:12px;color:#cdcdcd;left:154.5px;width:34px;text-align:center;">7</div>
<div class="t" style="top:504.5px;height:20px;line-height:20px;font-size:12px;color:#cdcdcd;left:154.5px;width:34px;text-align:center;">8</div>
<div class="t" style="top:534.5px;height:20px;line-height:20px;font-size:12px;color:#cdcdcd;left:154.5px;width:34px;text-align:center;">9</div>
<div class="t" style="top:564.5px;height:20px;line-height:20px;font-size:12px;color:#cdcdcd;left:154.5px;width:34px;text-align:center;">10</div>
<div class="t" style="top:594.5px;height:20px;line-height:20px;font-size:12px;color:#cdcdcd;left:154.5px;width:34px;text-align:center;">11</div>
<div class="t" style="top:624.5px;height:20px;line-height:20px;font-size:12px;color:#cdcdcd;left:154.5px;width:34px;text-align:center;">12</div>
<div class="t" style="top:654.5px;height:20px;line-height:20px;font-size:12px;color:#cdcdcd;left:154.5px;width:34px;text-align:center;">13</div>
<div class="t" style="top:684.5px;height:20px;line-height:20px;font-size:12px;color:#cdcdcd;left:154.5px;width:34px;text-align:center;">14</div>
<div class="t" style="top:714.5px;height:20px;line-height:20px;font-size:12px;color:#cdcdcd;left:154.5px;width:34px;text-align:center;">15</div>
<div class="t" style="top:744.5px;height:20px;line-height:20px;font-size:12px;color:#cdcdcd;left:154.5px;width:34px;text-align:center;">16</div>
<div class="t" style="top:295.5px;height:20px;line-height:20px;font-size:13px;color:#111;left:195px;">销售费用 -广告费和业务宣传费</div>
<div class="t" style="top:295.5px;height:20px;line-height:20px;font-size:12.6px;color:#111;left:386px;letter-spacing:0.2px;">02011</div>
<div class="t" style="top:295.5px;height:20px;line-height:20px;font-size:12.6px;color:#111;right:1095px;text-align:right;">6.00%</div>
<div class="t" style="top:295.5px;height:20px;line-height:20px;font-size:12.6px;color:#111;right:994px;text-align:right;">18,867.92</div>
<div class="t" style="top:295.5px;height:20px;line-height:20px;font-size:12.6px;color:#111;right:864px;text-align:right;">1,132.08</div>
<div class="t" style="top:295.5px;height:20px;line-height:20px;font-size:12.6px;color:#111;right:655px;text-align:right;">20,000.00</div>
<svg style="left:1460px;top:240px" width="16" height="17" viewBox="0 0 16 17" fill="none" stroke="#505050" stroke-width="1.9"><path d="M8 15.4 C4.6 11.6 3.1 9.4 3.1 7 A4.9 4.9 0 0 1 12.9 7 C12.9 9.4 11.4 11.6 8 15.4Z" stroke-linejoin="round"/><circle cx="8" cy="6.9" r="1.7" fill="#505050" stroke="none"/></svg>
<svg style="left:1488px;top:240px" width="16" height="17" viewBox="0 0 16 17" fill="none" stroke="#505050" stroke-width="1.9"><rect x="1.6" y="2" width="9.4" height="9.4"/><path d="M6.3 4 V9.4 M3.6 6.7 H9 "/><path d="M13 5.6 H14.6 V15 H5.2 V13.4" stroke-width="1.8"/></svg>
<svg style="left:1516px;top:240px" width="16" height="17" viewBox="0 0 16 17" fill="none" stroke="#505050" stroke-width="1.9"><path d="M5.2 3.4 H1.8 V15 H6.4 M10.8 3.4 H14.2 V6.6 M5 1.8 H11 V4.6 H5Z"/><rect x="8.6" y="8.6" width="5.8" height="6.4" fill="#9a9a9a" stroke="#505050" stroke-width="1.6"/></svg>
<svg style="left:1544px;top:240px" width="16" height="17" viewBox="0 0 16 17" fill="none" stroke="#505050" stroke-width="1.9"><path d="M4.4 2.2 H1.8 V15 H13.6 V12.8 M4.4 2.2 V15 M4.4 2.2 H14.2 V4.4"/><path d="M6.6 4.8 H15 V12.2 H6.6Z" stroke-width="1.5"/><path d="M8.8 6.2 L12.8 10.8 M12.8 6.2 L8.8 10.8" stroke-width="1.7"/></svg>
<svg style="left:1572px;top:240px" width="16" height="17" viewBox="0 0 16 17" fill="none" stroke="#505050" stroke-width="1.9"><path d="M1 2.6 H15 M1 6.4 H7.6 M1 10.2 H4.6" stroke-width="1.9"/><path d="M11.4 6.2 L14.4 8.6 L8.8 14.4 L5.4 15 L6.2 11.8Z" stroke-linejoin="round" stroke-width="1.7"/></svg>
<svg style="left:1600px;top:240px" width="16" height="17" viewBox="0 0 16 17" fill="none" stroke="#505050" stroke-width="1.9"><path d="M7.6 5 L10.2 2.6 A3 3 0 0 1 14.4 6.8 L10.6 10.6 A3 3 0 0 1 6.4 10.6 M8.4 12 L5.8 14.4 A3 3 0 0 1 1.6 10.2 L5.4 6.4 A3 3 0 0 1 9.6 6.4" stroke-width="1.9"/></svg>
<svg style="left:1628px;top:240px" width="16" height="17" viewBox="0 0 16 17" fill="none" stroke="#505050" stroke-width="1.9"><path d="M2.4 6 V2.8 H5.6 M10.4 2.8 H13.6 V6 M13.6 11.4 V14.6 H10.4 M5.6 14.6 H2.4 V11.4" stroke-width="2.1"/></svg>
<div class="a" style="left:155px;top:791px;width:1500px;height:30px;background:#f5f5f5;border-top:1px solid #cfcfcf;border-bottom:1px solid #d4d4d4;border-left:1px solid #cfcfcf;"></div>
<div class="t" style="top:796.0px;height:20px;line-height:20px;font-size:13px;color:#111;font-weight:bold;left:159px;">合计</div>
<div class="t" style="top:795.5px;height:20px;line-height:20px;font-size:13px;color:#111;font-weight:bold;right:989px;text-align:right;letter-spacing:0.6px;">18,867.92</div>
<div class="t" style="top:795.5px;height:20px;line-height:20px;font-size:13px;color:#111;font-weight:bold;right:858px;text-align:right;letter-spacing:0.6px;">1,132.08</div>
<div class="t" style="top:795.5px;height:20px;line-height:20px;font-size:13px;color:#111;font-weight:bold;right:649px;text-align:right;letter-spacing:0.6px;">20,000.00</div>
<div class="a" style="left:155px;top:821px;width:1500px;height:17px;background:#f1f1f1;"></div>
<div class="a" style="left:207px;top:823px;width:1334px;height:13px;background:#bcbcbc;"></div>
<svg style="left:195.5px;top:825.3px" width="6" height="8" viewBox="0 0 6 8"><path d="M5 0 L1 4 L5 8Z" fill="#505050"/></svg>
<svg style="left:1643px;top:825.5px" width="6" height="8" viewBox="0 0 6 8"><path d="M1 0 L5 4 L1 8Z" fill="#505050"/></svg>
<div class="t" style="top:845.0px;height:20px;line-height:20px;font-size:13px;color:#8c8c8c;right:1431px;text-align:right;">备注</div>
<div class="a" style="left:254px;top:865px;width:1307px;height:1px;background:#d9d9d9;"></div>
<div class="t" style="top:873.5px;height:20px;line-height:20px;font-size:13px;color:#333;right:1431px;text-align:right;">制单人</div><div class="a" style="left:254px;top:892px;width:113px;height:1px;background:#d9d9d9;"></div>
<div class="t" style="top:873.5px;height:20px;line-height:20px;font-size:13px;color:#111;left:254.5px;">徐安琪</div>
<div class="t" style="top:873.5px;height:20px;line-height:20px;font-size:13px;color:#333;right:1211.5px;text-align:right;">审核人</div><div class="a" style="left:474px;top:892px;width:113px;height:1px;background:#d9d9d9;"></div>
<div class="t" style="top:873.5px;height:20px;line-height:20px;font-size:13px;color:#333;right:991px;text-align:right;">审核时间</div><div class="a" style="left:694px;top:895px;width:153px;height:1px;background:#d9d9d9;"></div>
<div class="t" style="top:873.5px;height:20px;line-height:20px;font-size:13px;color:#333;right:731px;text-align:right;">审核日期</div><div class="a" style="left:954px;top:895px;width:113px;height:1px;background:#d9d9d9;"></div>
<div class="t" style="top:873.5px;height:20px;line-height:20px;font-size:13px;color:#333;right:511px;text-align:right;">打印次数</div><div class="a" style="left:1174px;top:892px;width:113px;height:1px;background:#d9d9d9;"></div>
<div class="t" style="top:872.0px;height:20px;line-height:20px;font-size:11px;color:#111;left:1175px;">0</div>
<div class="t" style="top:873.5px;height:20px;line-height:20px;font-size:13px;color:#333;right:291px;text-align:right;">创建时间</div><div class="a" style="left:1394px;top:895px;width:153px;height:1px;background:#d9d9d9;"></div>
<div class="t" style="top:873.5px;height:20px;line-height:20px;font-size:12.6px;color:#111;left:1397px;">2025-05-28 17:58:25</div>
<div class="a" style="left:130px;top:898px;width:1550px;height:7px;background:#f7f7f7;"></div>
<div class="a" style="left:1663px;top:83px;width:17px;height:815px;background:#f1f1f1;"></div>
<div class="a" style="left:1665px;top:100px;width:13px;height:778px;background:#c1c1c1;"></div>
<svg style="left:1667.5px;top:89.4px" width="8" height="5" viewBox="0 0 8 5"><path d="M0 4.6 L4 0.2 L8 4.6Z" fill="#a3a3a3"/></svg>
<svg style="left:1667.6px;top:886.8px" width="7.4" height="4.2" viewBox="0 0 7.4 4.2"><path d="M0 0.2 L3.7 4 L7.4 0.2Z" fill="#505050"/></svg>
<div class="a" style="left:707px;top:401px;width:380px;height:180px;background:#fff;border-radius:6px;box-shadow:0 2px 10px rgba(0,0,0,0.35);z-index:10;"></div>
<div class="a" style="left:707px;top:401px;width:380px;height:40px;background:#f5f5f5;border-radius:6px 6px 0 0;z-index:11;"></div>
<div class="a" style="left:722px;top:410px;width:20px;height:20px;border-radius:50%;background:#fba20c;z-index:12"></div>
<div class="a" style="left:731px;top:414px;width:2.4px;height:8.5px;background:#fff;border-radius:1px;z-index:13;"></div>
<div class="a" style="left:730.8px;top:424.5px;width:2.8px;height:2.8px;background:#fff;border-radius:50%;z-index:13;"></div>
<div class="t" style="top:410.0px;height:20px;line-height:20px;font-size:14px;color:#444;font-weight:bold;left:751.5px;z-index:12;">提示</div>
<div class="t" style="top:410.0px;height:20px;line-height:20px;font-size:14px;color:#2a7de1;font-weight:bold;left:1004px;text-decoration:underline;z-index:12;">问服宝</div>
<svg style="left:1058px;top:413px;z-index:12" width="13" height="13" viewBox="0 0 13 13"><path d="M1 1 L12 12 M12 1 L1 12" stroke="#555" stroke-width="1.5"/></svg>
<div class="t" style="top:451.5px;height:20px;line-height:20px;font-size:12px;color:#222;left:751px;z-index:12;">请驳回制单人！ 预付冲销金额和应付冲销金额不相等</div>
<div class="a" style="left:1007px;top:537px;width:60px;height:24px;background:#2f80ed;border-radius:2px;z-index:12;"></div>
<div class="t" style="top:539.5px;height:20px;line-height:20px;font-size:12px;color:#fff;left:1007.0px;width:60px;text-align:center;z-index:13;">确定(O)</div>
<div id="wm">
<div style="left:-100px;top:18px"><b>电话：</b><i style="letter-spacing:2.45px">400-665-0028</i></div>
<div style="left:-100px;top:48px"><b>网址：</b><i style="letter-spacing:0.6px">www.chanjet.net</i></div>
<div style="left:171px;top:18px"><b>电话：</b><i style="letter-spacing:2.45px">400-665-0028</i></div>
<div style="left:171px;top:48px"><b>网址：</b><i style="letter-spacing:0.6px">www.chanjet.net</i></div>
<div style="left:442px;top:18px"><b>电话：</b><i style="letter-spacing:2.45px">400-665-0028</i></div>
<div style="left:442px;top:48px"><b>网址：</b><i style="letter-spacing:0.6px">www.chanjet.net</i></div>
<div style="left:713px;top:18px"><b>电话：</b><i style="letter-spacing:2.45px">400-665-0028</i></div>
<div style="left:713px;top:48px"><b>网址：</b><i style="letter-spacing:0.6px">www.chanjet.net</i></div>
<div style="left:984px;top:18px"><b>电话：</b><i style="letter-spacing:2.45px">400-665-0028</i></div>
<div style="left:984px;top:48px"><b>网址：</b><i style="letter-spacing:0.6px">www.chanjet.net</i></div>
<div style="left:1255px;top:18px"><b>电话：</b><i style="letter-spacing:2.45px">400-665-0028</i></div>
<div style="left:1255px;top:48px"><b>网址：</b><i style="letter-spacing:0.6px">www.chanjet.net</i></div>
<div style="left:1526px;top:18px"><b>电话：</b><i style="letter-spacing:2.45px">400-665-0028</i></div>
<div style="left:1526px;top:48px"><b>网址：</b><i style="letter-spacing:0.6px">www.chanjet.net</i></div>
<div style="left:-100px;top:128px"><b>电话：</b><i style="letter-spacing:2.45px">400-665-0028</i></div>
<div style="left:-100px;top:158px"><b>网址：</b><i style="letter-spacing:0.6px">www.chanjet.net</i></div>
<div style="left:171px;top:128px"><b>电话：</b><i style="letter-spacing:2.45px">400-665-0028</i></div>
<div style="left:171px;top:158px"><b>网址：</b><i style="letter-spacing:0.6px">www.chanjet.net</i></div>
<div style="left:442px;top:128px"><b>电话：</b><i style="letter-spacing:2.45px">400-665-0028</i></div>
<div style="left:442px;top:158px"><b>网址：</b><i style="letter-spacing:0.6px">www.chanjet.net</i></div>
<div style="left:713px;top:128px"><b>电话：</b><i style="letter-spacing:2.45px">400-665-0028</i></div>
<div style="left:713px;top:158px"><b>网址：</b><i style="letter-spacing:0.6px">www.chanjet.net</i></div>
<div style="left:984px;top:128px"><b>电话：</b><i style="letter-spacing:2.45px">400-665-0028</i></div>
<div style="left:984px;top:158px"><b>网址：</b><i style="letter-spacing:0.6px">www.chanjet.net</i></div>
<div style="left:1255px;top:128px"><b>电话：</b><i style="letter-spacing:2.45px">400-665-0028</i></div>
<div style="left:1255px;top:158px"><b>网址：</b><i style="letter-spacing:0.6px">www.chanjet.net</i></div>
<div style="left:1526px;top:128px"><b>电话：</b><i style="letter-spacing:2.45px">400-665-0028</i></div>
<div style="left:1526px;top:158px"><b>网址：</b><i style="letter-spacing:0.6px">www.chanjet.net</i></div>
<div style="left:-100px;top:238px"><b>电话：</b><i style="letter-spacing:2.45px">400-665-0028</i></div>
<div style="left:-100px;top:268px"><b>网址：</b><i style="letter-spacing:0.6px">www.chanjet.net</i></div>
<div style="left:171px;top:238px"><b>电话：</b><i style="letter-spacing:2.45px">400-665-0028</i></div>
<div style="left:171px;top:268px"><b>网址：</b><i style="letter-spacing:0.6px">www.chanjet.net</i></div>
<div style="left:442px;top:238px"><b>电话：</b><i style="letter-spacing:2.45px">400-665-0028</i></div>
<div style="left:442px;top:268px"><b>网址：</b><i style="letter-spacing:0.6px">www.chanjet.net</i></div>
<div style="left:713px;top:238px"><b>电话：</b><i style="letter-spacing:2.45px">400-665-0028</i></div>
<div style="left:713px;top:268px"><b>网址：</b><i style="letter-spacing:0.6px">www.chanjet.net</i></div>
<div style="left:984px;top:238px"><b>电话：</b><i style="letter-spacing:2.45px">400-665-0028</i></div>
<div style="left:984px;top:268px"><b>网址：</b><i style="letter-spacing:0.6px">www.chanjet.net</i></div>
<div style="left:1255px;top:238px"><b>电话：</b><i style="letter-spacing:2.45px">400-665-0028</i></div>
<div style="left:1255px;top:268px"><b>网址：</b><i style="letter-spacing:0.6px">www.chanjet.net</i></div>
<div style="left:1526px;top:238px"><b>电话：</b><i style="letter-spacing:2.45px">400-665-0028</i></div>
<div style="left:1526px;top:268px"><b>网址：</b><i style="letter-spacing:0.6px">www.chanjet.net</i></div>
<div style="left:-100px;top:348px"><b>电话：</b><i style="letter-spacing:2.45px">400-665-0028</i></div>
<div style="left:-100px;top:378px"><b>网址：</b><i style="letter-spacing:0.6px">www.chanjet.net</i></div>
<div style="left:171px;top:348px"><b>电话：</b><i style="letter-spacing:2.45px">400-665-0028</i></div>
<div style="left:171px;top:378px"><b>网址：</b><i style="letter-spacing:0.6px">www.chanjet.net</i></div>
<div style="left:442px;top:348px"><b>电话：</b><i style="letter-spacing:2.45px">400-665-0028</i></div>
<div style="left:442px;top:378px"><b>网址：</b><i style="letter-spacing:0.6px">www.chanjet.net</i></div>
<div style="left:713px;top:348px"><b>电话：</b><i style="letter-spacing:2.45px">400-665-0028</i></div>
<div style="left:713px;top:378px"><b>网址：</b><i style="letter-spacing:0.6px">www.chanjet.net</i></div>
<div style="left:984px;top:348px"><b>电话：</b><i style="letter-spacing:2.45px">400-665-0028</i></div>
<div style="left:984px;top:378px"><b>网址：</b><i style="letter-spacing:0.6px">www.chanjet.net</i></div>
<div style="left:1255px;top:348px"><b>电话：</b><i style="letter-spacing:2.45px">400-665-0028</i></div>
<div style="left:1255px;top:378px"><b>网址：</b><i style="letter-spacing:0.6px">www.chanjet.net</i></div>
<div style="left:1526px;top:348px"><b>电话：</b><i style="letter-spacing:2.45px">400-665-0028</i></div>
<div style="left:1526px;top:378px"><b>网址：</b><i style="letter-spacing:0.6px">www.chanjet.net</i></div>
<div style="left:-100px;top:458px"><b>电话：</b><i style="letter-spacing:2.45px">400-665-0028</i></div>
<div style="left:-100px;top:488px"><b>网址：</b><i style="letter-spacing:0.6px">www.chanjet.net</i></div>
<div style="left:171px;top:458px"><b>电话：</b><i style="letter-spacing:2.45px">400-665-0028</i></div>
<div style="left:171px;top:488px"><b>网址：</b><i style="letter-spacing:0.6px">www.chanjet.net</i></div>
<div style="left:442px;top:458px"><b>电话：</b><i style="letter-spacing:2.45px">400-665-0028</i></div>
<div style="left:442px;top:488px"><b>网址：</b><i style="letter-spacing:0.6px">www.chanjet.net</i></div>
<div style="left:713px;top:458px"><b>电话：</b><i style="letter-spacing:2.45px">400-665-0028</i></div>
<div style="left:713px;top:488px"><b>网址：</b><i style="letter-spacing:0.6px">www.chanjet.net</i></div>
<div style="left:984px;top:458px"><b>电话：</b><i style="letter-spacing:2.45px">400-665-0028</i></div>
<div style="left:984px;top:488px"><b>网址：</b><i style="letter-spacing:0.6px">www.chanjet.net</i></div>
<div style="left:1255px;top:458px"><b>电话：</b><i style="letter-spacing:2.45px">400-665-0028</i></div>
<div style="left:1255px;top:488px"><b>网址：</b><i style="letter-spacing:0.6px">www.chanjet.net</i></div>
<div style="left:1526px;top:458px"><b>电话：</b><i style="letter-spacing:2.45px">400-665-0028</i></div>
<div style="left:1526px;top:488px"><b>网址：</b><i style="letter-spacing:0.6px">www.chanjet.net</i></div>
<div style="left:-100px;top:568px"><b>电话：</b><i style="letter-spacing:2.45px">400-665-0028</i></div>
<div style="left:-100px;top:598px"><b>网址：</b><i style="letter-spacing:0.6px">www.chanjet.net</i></div>
<div style="left:171px;top:568px"><b>电话：</b><i style="letter-spacing:2.45px">400-665-0028</i></div>
<div style="left:171px;top:598px"><b>网址：</b><i style="letter-spacing:0.6px">www.chanjet.net</i></div>
<div style="left:442px;top:568px"><b>电话：</b><i style="letter-spacing:2.45px">400-665-0028</i></div>
<div style="left:442px;top:598px"><b>网址：</b><i style="letter-spacing:0.6px">www.chanjet.net</i></div>
<div style="left:713px;top:568px"><b>电话：</b><i style="letter-spacing:2.45px">400-665-0028</i></div>
<div style="left:713px;top:598px"><b>网址：</b><i style="letter-spacing:0.6px">www.chanjet.net</i></div>
<div style="left:984px;top:568px"><b>电话：</b><i style="letter-spacing:2.45px">400-665-0028</i></div>
<div style="left:984px;top:598px"><b>网址：</b><i style="letter-spacing:0.6px">www.chanjet.net</i></div>
<div style="left:1255px;top:568px"><b>电话：</b><i style="letter-spacing:2.45px">400-665-0028</i></div>
<div style="left:1255px;top:598px"><b>网址：</b><i style="letter-spacing:0.6px">www.chanjet.net</i></div>
<div style="left:1526px;top:568px"><b>电话：</b><i style="letter-spacing:2.45px">400-665-0028</i></div>
<div style="left:1526px;top:598px"><b>网址：</b><i style="letter-spacing:0.6px">www.chanjet.net</i></div>
<div style="left:-100px;top:678px"><b>电话：</b><i style="letter-spacing:2.45px">400-665-0028</i></div>
<div style="left:-100px;top:708px"><b>网址：</b><i style="letter-spacing:0.6px">www.chanjet.net</i></div>
<div style="left:171px;top:678px"><b>电话：</b><i style="letter-spacing:2.45px">400-665-0028</i></div>
<div style="left:171px;top:708px"><b>网址：</b><i style="letter-spacing:0.6px">www.chanjet.net</i></div>
<div style="left:442px;top:678px"><b>电话：</b><i style="letter-spacing:2.45px">400-665-0028</i></div>
<div style="left:442px;top:708px"><b>网址：</b><i style="letter-spacing:0.6px">www.chanjet.net</i></div>
<div style="left:713px;top:678px"><b>电话：</b><i style="letter-spacing:2.45px">400-665-0028</i></div>
<div style="left:713px;top:708px"><b>网址：</b><i style="letter-spacing:0.6px">www.chanjet.net</i></div>
<div style="left:984px;top:678px"><b>电话：</b><i style="letter-spacing:2.45px">400-665-0028</i></div>
<div style="left:984px;top:708px"><b>网址：</b><i style="letter-spacing:0.6px">www.chanjet.net</i></div>
<div style="left:1255px;top:678px"><b>电话：</b><i style="letter-spacing:2.45px">400-665-0028</i></div>
<div style="left:1255px;top:708px"><b>网址：</b><i style="letter-spacing:0.6px">www.chanjet.net</i></div>
<div style="left:1526px;top:678px"><b>电话：</b><i style="letter-spacing:2.45px">400-665-0028</i></div>
<div style="left:1526px;top:708px"><b>网址：</b><i style="letter-spacing:0.6px">www.chanjet.net</i></div>
<div style="left:-100px;top:788px"><b>电话：</b><i style="letter-spacing:2.45px">400-665-0028</i></div>
<div style="left:-100px;top:818px"><b>网址：</b><i style="letter-spacing:0.6px">www.chanjet.net</i></div>
<div style="left:171px;top:788px"><b>电话：</b><i style="letter-spacing:2.45px">400-665-0028</i></div>
<div style="left:171px;top:818px"><b>网址：</b><i style="letter-spacing:0.6px">www.chanjet.net</i></div>
<div style="left:442px;top:788px"><b>电话：</b><i style="letter-spacing:2.45px">400-665-0028</i></div>
<div style="left:442px;top:818px"><b>网址：</b><i style="letter-spacing:0.6px">www.chanjet.net</i></div>
<div style="left:713px;top:788px"><b>电话：</b><i style="letter-spacing:2.45px">400-665-0028</i></div>
<div style="left:713px;top:818px"><b>网址：</b><i style="letter-spacing:0.6px">www.chanjet.net</i></div>
<div style="left:984px;top:788px"><b>电话：</b><i style="letter-spacing:2.45px">400-665-0028</i></div>
<div style="left:984px;top:818px"><b>网址：</b><i style="letter-spacing:0.6px">www.chanjet.net</i></div>
<div style="left:1255px;top:788px"><b>电话：</b><i style="letter-spacing:2.45px">400-665-0028</i></div>
<div style="left:1255px;top:818px"><b>网址：</b><i style="letter-spacing:0.6px">www.chanjet.net</i></div>
<div style="left:1526px;top:788px"><b>电话：</b><i style="letter-spacing:2.45px">400-665-0028</i></div>
<div style="left:1526px;top:818px"><b>网址：</b><i style="letter-spacing:0.6px">www.chanjet.net</i></div>
<div style="left:-100px;top:898px"><b>电话：</b><i style="letter-spacing:2.45px">400-665-0028</i></div>
<div style="left:-100px;top:928px"><b>网址：</b><i style="letter-spacing:0.6px">www.chanjet.net</i></div>
<div style="left:171px;top:898px"><b>电话：</b><i style="letter-spacing:2.45px">400-665-0028</i></div>
<div style="left:171px;top:928px"><b>网址：</b><i style="letter-spacing:0.6px">www.chanjet.net</i></div>
<div style="left:442px;top:898px"><b>电话：</b><i style="letter-spacing:2.45px">400-665-0028</i></div>
<div style="left:442px;top:928px"><b>网址：</b><i style="letter-spacing:0.6px">www.chanjet.net</i></div>
<div style="left:713px;top:898px"><b>电话：</b><i style="letter-spacing:2.45px">400-665-0028</i></div>
<div style="left:713px;top:928px"><b>网址：</b><i style="letter-spacing:0.6px">www.chanjet.net</i></div>
<div style="left:984px;top:898px"><b>电话：</b><i style="letter-spacing:2.45px">400-665-0028</i></div>
<div style="left:984px;top:928px"><b>网址：</b><i style="letter-spacing:0.6px">www.chanjet.net</i></div>
<div style="left:1255px;top:898px"><b>电话：</b><i style="letter-spacing:2.45px">400-665-0028</i></div>
<div style="left:1255px;top:928px"><b>网址：</b><i style="letter-spacing:0.6px">www.chanjet.net</i></div>
<div style="left:1526px;top:898px"><b>电话：</b><i style="letter-spacing:2.45px">400-665-0028</i></div>
<div style="left:1526px;top:928px"><b>网址：</b><i style="letter-spacing:0.6px">www.chanjet.net</i></div>
</div>
</body></html>
